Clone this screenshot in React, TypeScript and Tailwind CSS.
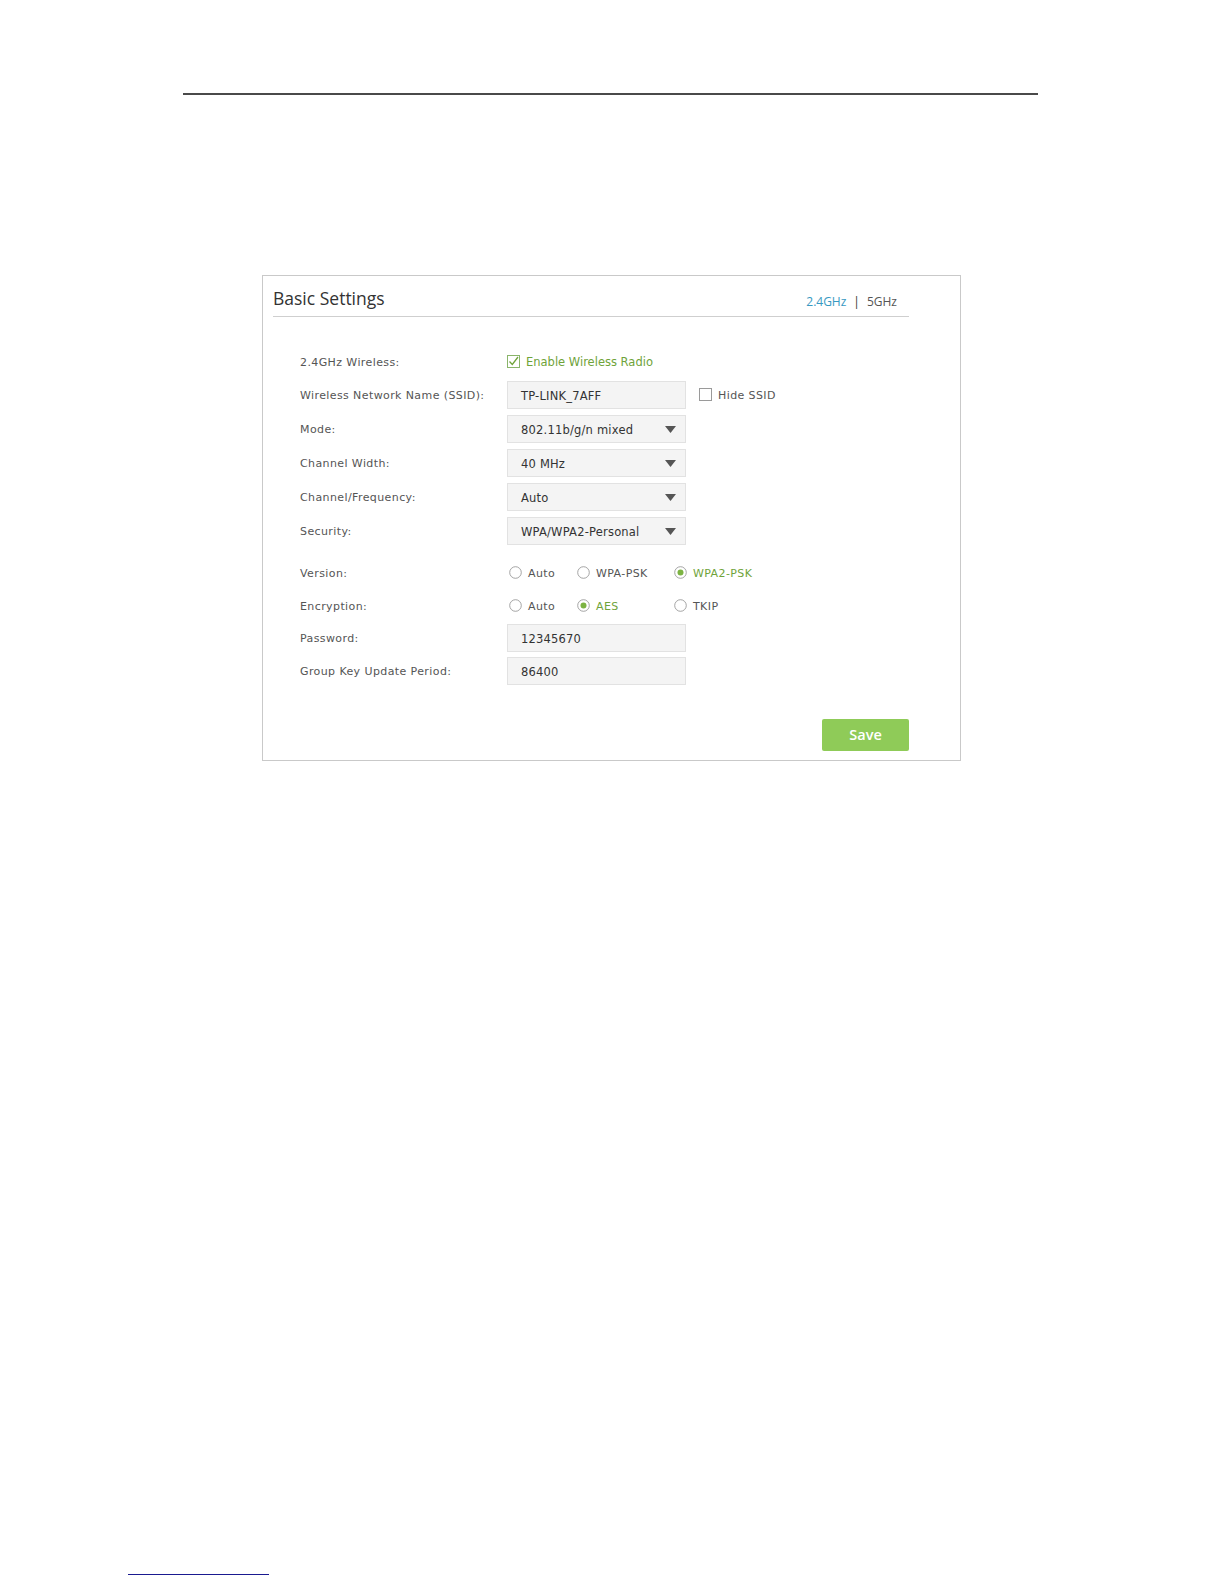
import React from "react";

const labelCls = "w-[207px] shrink-0 pt-[4px] text-[11px] text-[#555] tracking-[0.4px]";
const font = { fontFamily: '"DejaVu Sans", Verdana, sans-serif' };

function Box({ value, arrow }: { value: string; arrow?: boolean }) {
  return (
    <div className="w-[179px] h-[28px] bg-[#f4f4f4] border border-[#e2e2e2] flex items-center justify-between pl-[13px] pr-[9px] text-[11.5px] text-[#333] tracking-[0.2px]">
      <span className="pt-[4px]">{value}</span>
      {arrow && (
        <svg width="11" height="7" viewBox="0 0 11 7" className="mt-[2px]">
          <path d="M0 0 L11 0 L5.5 7 Z" fill="#555" />
        </svg>
      )}
    </div>
  );
}

function Radio({ checked, label, w }: { checked?: boolean; label: string; w: string }) {
  return (
    <div className={`flex items-center ${w}`}>
      <svg width="13" height="13" viewBox="0 0 13 13" className="ml-[2px]">
        <circle cx="6.5" cy="6.5" r="5.8" fill="white" stroke="#9a9a9a" strokeWidth="0.9" />
        {checked && <circle cx="6.5" cy="6.5" r="3" fill="#7cb342" />}
      </svg>
      <span className={`ml-[6px] pt-[3px] text-[11px] tracking-[0.4px] ${checked ? "text-[#6fa33a]" : "text-[#555]"}`}>{label}</span>
    </div>
  );
}

function Check({ checked }: { checked?: boolean }) {
  return (
    <svg width="13" height="13" viewBox="0 0 13 13">
      <rect x="0.5" y="0.5" width="12" height="12" fill="white" stroke={checked ? "#8ab56a" : "#9a9a9a"} strokeWidth="1" />
      {checked && <path d="M2.5 6.5 L5.3 9.5 L11 2" fill="none" stroke="#6fa33a" strokeWidth="1.3" />}
    </svg>
  );
}

export default function App() {
  return (
    <div className="w-full bg-white flex flex-col pb-[8px]" style={font}>
      <div className="mt-[93px] ml-[183px] w-[855px] h-[1.5px] bg-[#4a4a4a]" />
      <div className="mt-[180px] ml-[262px] w-[699px] h-[486px] border border-[#c9c9c9] flex flex-col">
        <div className="ml-[10px] w-[636px] h-[41px] border-b border-[#cfcfcf] flex items-end justify-between pb-[8px]">
          <span className="text-[17.5px] text-[#333] leading-none" style={{ fontFamily: '"Open Sans", sans-serif' }}>Basic Settings</span>
          <span className="text-[12px] leading-none mr-[12px]" style={{ fontFamily: '"Open Sans", sans-serif' }}>
            <span className="text-[#3799c2]">2.4GHz</span>
            <span className="text-[#333] mx-[7px]">|</span>
            <span className="text-[#555]">5GHz</span>
          </span>
        </div>
        <div className="pl-[37px] flex flex-col">
          <div className="mt-[31px] h-[28px] flex items-center">
            <span className={labelCls}>2.4GHz Wireless:</span>
            <div className="flex items-center">
              <Check checked />
              <span className="ml-[6px] pt-[3px] text-[11.5px] text-[#6fa33a]">Enable Wireless Radio</span>
            </div>
          </div>
          <div className="mt-[5px] h-[28px] flex items-center">
            <span className={labelCls}>Wireless Network Name (SSID):</span>
            <Box value="TP-LINK_7AFF" />
            <div className="ml-[13px] flex items-center">
              <Check />
              <span className="ml-[6px] pt-[3px] text-[11px] text-[#555] tracking-[0.4px]">Hide SSID</span>
            </div>
          </div>
          <div className="mt-[6px] h-[28px] flex items-center">
            <span className={labelCls}>Mode:</span>
            <Box value="802.11b/g/n mixed" arrow />
          </div>
          <div className="mt-[6px] h-[28px] flex items-center">
            <span className={labelCls}>Channel Width:</span>
            <Box value="40 MHz" arrow />
          </div>
          <div className="mt-[6px] h-[28px] flex items-center">
            <span className={labelCls}>Channel/Frequency:</span>
            <Box value="Auto" arrow />
          </div>
          <div className="mt-[6px] h-[28px] flex items-center">
            <span className={labelCls}>Security:</span>
            <Box value="WPA/WPA2-Personal" arrow />
          </div>
          <div className="mt-[14px] h-[28px] flex items-center">
            <span className={labelCls}>Version:</span>
            <Radio label="Auto" w="w-[68px]" />
            <Radio label="WPA-PSK" w="w-[97px]" />
            <Radio label="WPA2-PSK" checked w="w-[100px]" />
          </div>
          <div className="mt-[5px] h-[28px] flex items-center">
            <span className={labelCls}>Encryption:</span>
            <Radio label="Auto" w="w-[68px]" />
            <Radio label="AES" checked w="w-[97px]" />
            <Radio label="TKIP" w="w-[100px]" />
          </div>
          <div className="mt-[4px] h-[28px] flex items-center">
            <span className={labelCls}>Password:</span>
            <Box value="12345670" />
          </div>
          <div className="mt-[5px] h-[28px] flex items-center">
            <span className={labelCls}>Group Key Update Period:</span>
            <Box value="86400" />
          </div>
        </div>
        <div className="mt-[34px] ml-[559px] w-[87px] h-[32px] bg-[#8fcb58] rounded-[2px] flex items-center justify-center text-white text-[14.5px] font-semibold" style={{ fontFamily: '"Open Sans", sans-serif' }}>
          Save
        </div>
      </div>
      <div className="mt-[813px] ml-[128px] w-[141px] h-[1.5px] bg-[#1a1a90]" />
    </div>
  );
}
